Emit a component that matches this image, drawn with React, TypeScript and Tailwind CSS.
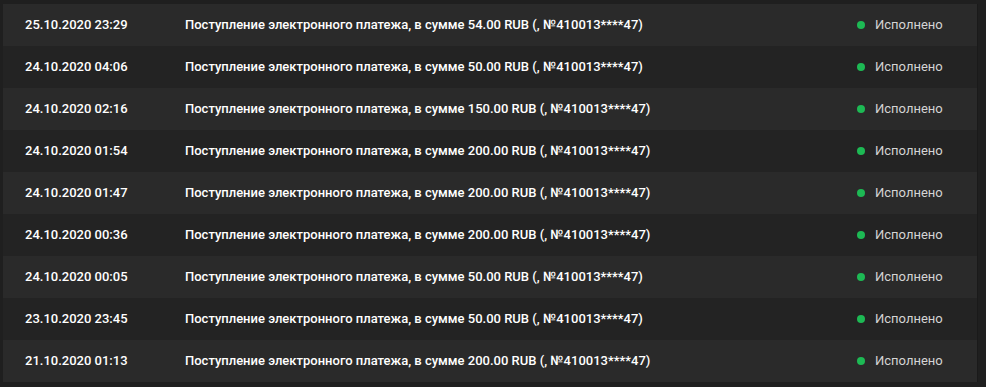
import React from "react";

const rows = [
  ["25.10.2020 23:29", "54.00"],
  ["24.10.2020 04:06", "50.00"],
  ["24.10.2020 02:16", "150.00"],
  ["24.10.2020 01:54", "200.00"],
  ["24.10.2020 01:47", "200.00"],
  ["24.10.2020 00:36", "200.00"],
  ["24.10.2020 00:05", "50.00"],
  ["23.10.2020 23:45", "50.00"],
  ["21.10.2020 01:13", "200.00"],
];

export default function App() {
  return (
    <div
      className="w-[986px] h-[387px] bg-[#1f1f1f] pt-[4px] pl-[3px] pr-[8px] overflow-hidden"
      style={{ fontFamily: "Roboto, 'Noto Sans', sans-serif" }}
    >
      <div className="flex flex-col border-r border-[#1a1a1a]">
        {rows.map(([d, a], i) => (
          <div
            key={i}
            className={`flex items-center h-[42px] pl-[22px] text-[13px] ${
              i % 2 === 0 ? "bg-[#2a2a2a]" : "bg-[#232323]"
            }`}
          >
            <div className="w-[160px] shrink-0 font-medium text-white">{d}</div>
            <div className="flex-1 font-medium text-white">
              Поступление электронного платежа, в сумме {a} RUB (, №410013****47)
            </div>
            <div className="w-[120px] shrink-0 flex items-center">
              <span className="w-[8px] h-[8px] rounded-full bg-[#1db954] mr-[10px]" />
              <span className="text-[#d4d4d4]">Исполнено</span>
            </div>
          </div>
        ))}
      </div>
    </div>
  );
}
